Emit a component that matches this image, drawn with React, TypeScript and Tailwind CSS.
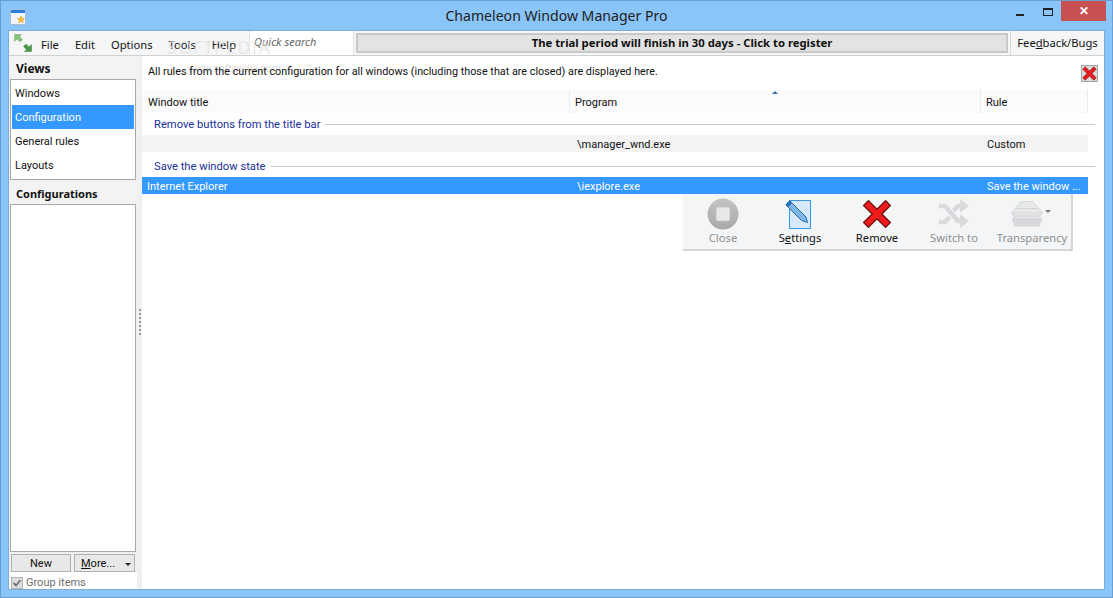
import React from "react";

const noto = { fontFamily: '"Noto Sans", Tahoma, sans-serif' };
const listFont = "font-['Roboto',sans-serif] text-[11px]";

function AppIcon() {
	return (
		<svg width="16" height="16" viewBox="0 0 16 16">
			<rect x="0.5" y="0.5" width="15" height="15" rx="1" fill="#f2f6fc" stroke="#a9bdd3" />
			<rect x="1" y="1" width="14" height="3" fill="#2b7fdc" />
			<path d="M9.5 6l1.1 2.2 2.4.3-1.7 1.7.4 2.4-2.2-1.1-2.2 1.1.4-2.4L6 8.500l2.400-.3z" fill="#f6c32c" stroke="#de8f2a" strokeWidth="0.5" transform="translate(1.500 1)" />
		</svg>
	);
}

function ArrowsIcon() {
	return (
		<svg width="18" height="18" viewBox="0 0 18 18">
			<path d="M0.500 0.500h7l-2 2 3 3-2.500 2.500-3-3-2.500 2.500z" fill="#86c47a" stroke="#78ad6c" strokeWidth="0.5" />
			<path d="M17.500 17.500h-7l2-2-3-3 2.500-2.500 3 3 2.500-2.500z" fill="#4c9648" stroke="#3f7f3b" strokeWidth="0.5" />
		</svg>
	);
}

function RedX({ size }: { size: number }) {
	return (
		<svg width={size} height={size} viewBox="0 0 28 28">
			<path
				d="M6 1.500 14 9.500 22 1.500 26.500 6 18.500 14 26.500 22 22 26.500 14 18.500 6 26.500 1.500 22 9.500 14 1.500 6z"
				fill="#ee1c1c"
				stroke="#6e1010"
				strokeWidth="1.2"
				strokeLinejoin="round"
			/>
		</svg>
	);
}

function CloseCircle() {
	return (
		<svg width="32" height="32" viewBox="0 0 32 32">
			<defs>
				<linearGradient id="closeGrad" x1="0" y1="0" x2="0" y2="1">
					<stop offset="0" stopColor="#c4c4c4" />
					<stop offset="1" stopColor="#a8a8a8" />
				</linearGradient>
			</defs>
			<circle cx="16" cy="16" r="15.500" fill="url(#closeGrad)" />
			<rect x="9" y="9" width="14" height="14" rx="2" fill="#e8e8e8" stroke="#c4c4c4" />
		</svg>
	);
}

function SettingsIcon() {
	return (
		<svg width="34" height="30" viewBox="0 0 34 30">
			<rect x="6.500" y="1.500" width="21" height="28" fill="#d6eafc" stroke="#3a97e0" />
			<path d="M3 6 7 2 23 18 24.500 23.500 18.500 21.500z" fill="#7fb6e6" stroke="#1f6fb5" strokeWidth="1" strokeLinejoin="round" />
			<path d="M2.500 5.500 6.500 1.500 9 4 5 8z" fill="#1e6bb0" />
		</svg>
	);
}

function SwitchIcon() {
	return (
		<svg width="32" height="30" viewBox="0 0 32 30">
			<path d="M1 7h6l13 15h3M1 23h6l4.500-5M15.500 11.500 20 7h3" fill="none" stroke="#d8dadc" strokeWidth="4.500" />
			<path d="M22 0l9 7-9 7zM22 15l9 7-9 7z" fill="#d8dadc" />
		</svg>
	);
}

function LayersIcon() {
	return (
		<svg width="32" height="26" viewBox="0 0 32 26">
			<path d="M0.500 17h31l-3 8.500H3.500z" fill="#d6d8da" />
			<path d="M0.500 11.500h31l-4 6.500H4.500z" fill="#e4e6e8" stroke="#cfd1d3" strokeWidth="0.8" />
			<path d="M0.500 12 10 0.500h12L31.500 12z" fill="#e6e8ea" stroke="#d2d4d6" strokeWidth="0.8" />
			<path d="M5 7.500h22" stroke="#d0d2d4" strokeWidth="1" />
			<path d="M3 15h26" stroke="#cfd1d3" strokeWidth="1" />
		</svg>
	);
}

function Tool({ icon, label, enabled, width }: { icon: React.ReactNode; label: React.ReactNode; enabled?: boolean; width: string }) {
	return (
		<div className={`flex flex-col items-center shrink-0 ${width}`}>
			<div className="h-[33px] pt-px flex items-center justify-center">{icon}</div>
			<div className={`text-[11.2px] leading-[15px] whitespace-nowrap ${enabled ? "text-[#111111]" : "text-[#8e8e8e]"}`}>{label}</div>
		</div>
	);
}

function GroupHeader({ label, height }: { label: string; height: string }) {
	return (
		<div className={`flex items-end pl-[12px] shrink-0 ${height}`}>
			<div className="h-[22px] flex items-center w-full">
				<span className="text-[#1a2f9c] text-[11.2px] whitespace-nowrap pt-[2px]">{label}</span>
				<div className="flex-1 h-px bg-[#c5c9d6] ml-[5px] mr-[9px]" />
			</div>
		</div>
	);
}

export default function App() {
	return (
		<div className="w-[1113px] h-[598px] bg-[#8ac5f9] flex flex-col overflow-hidden border border-[#6b9fd0] text-[11.2px] text-[#111111]" style={noto}>
			{/* title bar */}
			<div className="h-[29px] flex items-center shrink-0">
				<div className="ml-[9px] mt-[2px]">
					<AppIcon />
				</div>
				<div className="flex-1 text-center text-[14.1px] text-[#222222] pl-[83px]">Chameleon Window Manager Pro</div>
				<div className="flex items-start self-start mr-[6px] h-[21px]">
					<div className="w-[30px] h-[21px] flex items-center justify-center pl-px">
						<div className="w-[8px] h-[2px] bg-[#222222] mt-[7px]" />
					</div>
					<div className="w-[26px] h-[21px] flex items-center justify-center pl-px">
						<div className="w-[10px] h-[8px] border border-t-2 border-[#222222]" />
					</div>
					<div className="w-[45px] h-[20px] bg-[#c75050] flex items-center justify-center text-white text-[12px] font-bold ml-px">✕</div>
				</div>
			</div>

			{/* client area */}
			<div className="flex-1 mx-[7px] mb-[7px] border border-[#7eaed8] bg-white flex flex-col min-h-0 relative">
				{/* menu bar */}
				<div className="h-[25px] bg-[#f5f6f7] border-b border-[#d0d0d0] flex items-stretch shrink-0">
					<div className="w-[24px] flex items-center justify-end pr-px">
						<ArrowsIcon />
					</div>
					<div className="w-[216px] flex items-center pl-[8px] gap-[16px] pt-[4px]">
						<span>File</span>
						<span>Edit</span>
						<span>Options</span>
						<span>Tools</span>
						<span>Help</span>
					</div>
					<div className="w-[105px] bg-white border-x border-[#e2e2e2] flex items-center pl-[4px] italic text-[11px] text-[#666666] pb-px">Quick search</div>
					<div className="flex-1 mx-[2px] my-[2px] bg-[#e3e3e3] border-2 border-[#c8c8c8] flex items-center justify-center font-bold text-[11.3px]">
						The trial period will finish in 30 days - Click to register
					</div>
					<div className="w-[94px] border-l border-[#d8d8d8] flex items-center justify-center">
						<span>
							Fee<span className="underline">d</span>back/Bugs
						</span>
					</div>
				</div>

				{/* softpedia watermark */}
				<div className="absolute left-[158px] top-[3px] text-[18px] tracking-[1px] text-[#e3e3e3] pointer-events-none opacity-70">SOFTPEDIA</div>
				<div className="absolute left-[179px] top-[30px] text-[10px] text-[#dddddd] pointer-events-none">www.softpedia.com</div>

				<div className="flex-1 flex min-h-0">
					{/* sidebar */}
					<div className="w-[128px] bg-[#f0f0f0] flex flex-col shrink-0">
						<div className="h-[23px] flex items-center pl-[7px] pt-[3px] font-bold text-[12px] bg-[#f3f3f3]">Views</div>
						<div className={`mx-px h-[101px] border border-[#a8a8a8] bg-white p-px flex flex-col ${listFont}`}>
							<div className="h-[24px] flex items-center pl-[3px] pt-[2px]">Windows</div>
							<div className="h-[24px] flex items-center pl-[3px] pt-[2px] bg-[#3399ff] text-white">Configuration</div>
							<div className="h-[24px] flex items-center pl-[3px] pt-[2px]">General rules</div>
							<div className="h-[24px] flex items-center pl-[3px] pt-[2px]">Layouts</div>
						</div>
						<div className="h-[22px] mt-[2px] flex items-center pl-[7px] pt-[2px] font-bold text-[11px] bg-[#f3f3f3]">Configurations</div>
						<div className="mx-px flex-1 border border-[#a8a8a8] bg-white" />
						<div className={`flex gap-[3px] pl-[2px] pt-[2px] h-[20px] ${listFont}`}>
							<div className="w-[60px] h-[18px] bg-[#e8e8e8] border border-[#b0b0b0] flex items-center justify-center pt-[2px]">New</div>
							<div className="w-[61px] h-[18px] bg-[#e8e8e8] border border-[#b0b0b0] flex items-center pl-[6px] pt-[2px]">
								<span>
									<span className="underline">M</span>ore...
								</span>
								<span className="ml-[10px] w-0 h-0 border-x-[3px] border-x-transparent border-t-[3px] border-t-[#222222]" />
							</div>
						</div>
						<div className={`h-[17px] bg-white flex items-center pl-[2px] pt-[4px] gap-[3px] text-[#6e6e6e] ${listFont}`}>
							<div className="w-[12px] h-[12px] bg-[#dedede] border border-[#b0b0b0] flex items-center justify-center">
								<svg width="10" height="10" viewBox="0 0 10 10">
									<path d="M1.500 5 4 7.500 8.500 2" fill="none" stroke="#707070" strokeWidth="1.800" />
								</svg>
							</div>
							<span className="pt-[2px]">Group items</span>
						</div>
					</div>

					{/* splitter */}
					<div className="w-[5px] bg-[#f0f0f0] flex flex-col items-center justify-center gap-[2px] shrink-0 pb-[2px]">
						{[0, 1, 2, 3, 4, 5, 6].map((i) => (
							<div key={i} className="w-[2px] h-[2px] bg-[#9a9a9a]" />
						))}
					</div>

					{/* main panel */}
					<div className={`flex-1 relative min-w-0 flex flex-col ${listFont}`}>
						<div className="h-[34px] flex items-center justify-between pl-[6px] pr-[6px] shrink-0">
							<span className="mb-[2px] text-[10.8px]">All rules from the current configuration for all windows (including those that are closed) are displayed here.</span>
							<div className="w-[17px] h-[17px] bg-[#dcdcdc] border border-[#a5a5a5] flex items-center justify-center">
								<RedX size={15} />
							</div>
						</div>
						<div className="h-[23px] bg-[#fbfbfc] flex mr-[16px] shrink-0 relative">
							<div className="w-[428px] shrink-0 border-r border-[#e4ecf5] flex items-center pl-[6px] pt-[4px]">Window title</div>
							<div className="w-[411px] shrink-0 border-r border-[#e4ecf5] flex items-center pl-[5px] pt-[4px]">Program</div>
							<div className="flex-1 border-r border-[#e4ecf5] flex items-center pl-[5px] pt-[4px]">Rule</div>
							<span className="absolute left-[630px] top-px w-0 h-0 border-x-[3px] border-x-transparent border-b-[3px] border-b-[#3a6ea5]" />
						</div>
						<GroupHeader label="Remove buttons from the title bar" height="h-[22px]" />
						<div className="h-[17px] mr-[16px] bg-[#f3f3f3] flex items-center shrink-0 pt-[4px]">
							<div className="w-[435px] shrink-0" />
							<div className="w-[410px] shrink-0 whitespace-nowrap">\manager_wnd.exe</div>
							<div className="whitespace-nowrap">Custom</div>
						</div>
						<GroupHeader label="Save the window state" height="h-[25px]" />
						<div className="h-[17px] mr-[16px] bg-[#3399ff] text-white flex items-center shrink-0 pt-[4px]">
							<div className="w-[435px] shrink-0 pl-[5px]">Internet Explorer</div>
							<div className="w-[410px] shrink-0 whitespace-nowrap">\iexplore.exe</div>
							<div className="whitespace-nowrap">Save the window ...</div>
						</div>

						{/* floating actions */}
						<div className="absolute left-[541px] top-[138px] w-[390px] h-[57px] bg-[#f4f5f7] border-r-2 border-b-2 border-[#d5d5d5] flex pt-[3px] pl-[5px] text-[11.2px]" style={noto}>
							<Tool icon={<CloseCircle />} label="Close" width="w-[70px]" />
							<Tool
								icon={<SettingsIcon />}
								label={
									<span>
										S<span className="underline">e</span>ttings
									</span>
								}
								enabled
								width="w-[84px]"
							/>
							<Tool icon={<RedX size={30} />} label="Remove" enabled width="w-[70px]" />
							<Tool icon={<SwitchIcon />} label="Switch to" width="w-[84px]" />
							<Tool
								icon={
									<div className="flex items-start ml-[-3px]">
										<LayersIcon />
										<span className="mt-[9px] ml-[2px] w-0 h-0 border-x-[3px] border-x-transparent border-t-[3px] border-t-[#777777]" />
									</div>
								}
								label="Transparency"
								width="w-[72px]"
							/>
						</div>
					</div>
				</div>
			</div>
		</div>
	);
}
